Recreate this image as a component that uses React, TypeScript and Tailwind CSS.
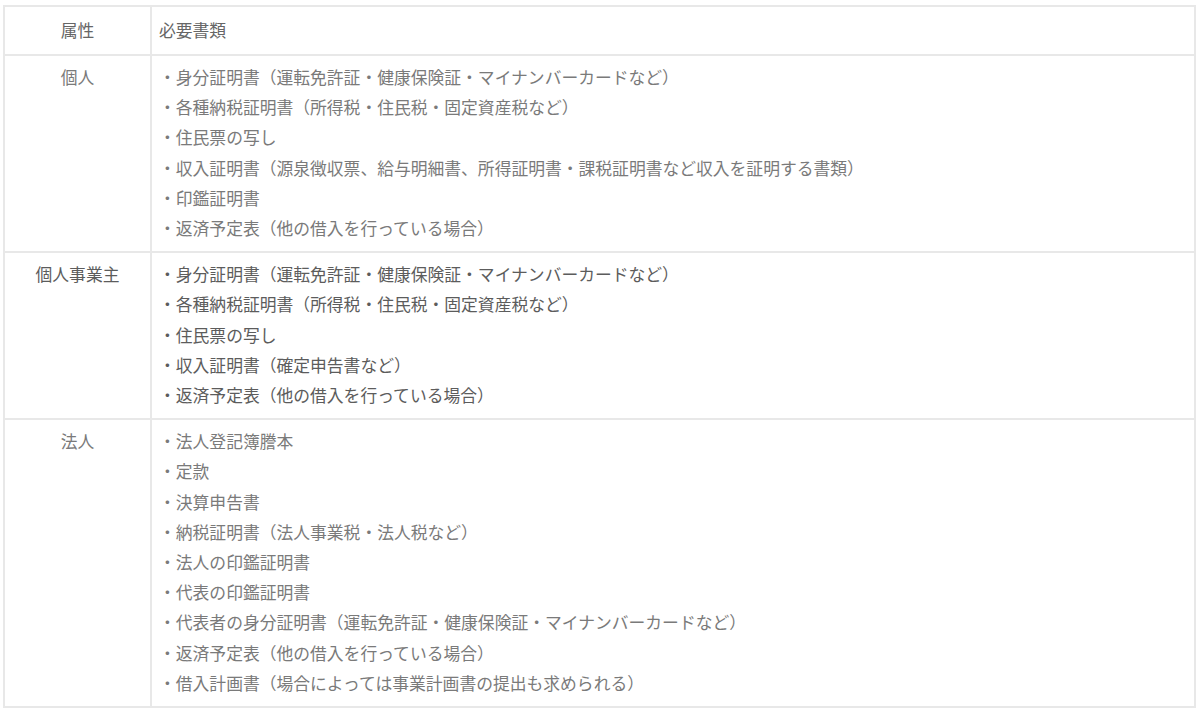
export default function App() {
  const rows: { label: string; items: string[]; color: string }[] = [
    {
      label: "個人",
      color: "text-[#7a7a7a]",
      items: [
        "・身分証明書（運転免許証・健康保険証・マイナンバーカードなど）",
        "・各種納税証明書（所得税・住民税・固定資産税など）",
        "・住民票の写し",
        "・収入証明書（源泉徴収票、給与明細書、所得証明書・課税証明書など収入を証明する書類）",
        "・印鑑証明書",
        "・返済予定表（他の借入を行っている場合）",
      ],
    },
    {
      label: "個人事業主",
      color: "text-[#5c5c5c]",
      items: [
        "・身分証明書（運転免許証・健康保険証・マイナンバーカードなど）",
        "・各種納税証明書（所得税・住民税・固定資産税など）",
        "・住民票の写し",
        "・収入証明書（確定申告書など）",
        "・返済予定表（他の借入を行っている場合）",
      ],
    },
    {
      label: "法人",
      color: "text-[#7a7a7a]",
      items: [
        "・法人登記簿謄本",
        "・定款",
        "・決算申告書",
        "・納税証明書（法人事業税・法人税など）",
        "・法人の印鑑証明書",
        "・代表の印鑑証明書",
        "・代表者の身分証明書（運転免許証・健康保険証・マイナンバーカードなど）",
        "・返済予定表（他の借入を行っている場合）",
        "・借入計画書（場合によっては事業計画書の提出も求められる）",
      ],
    },
  ];
  return (
    <div
      className="bg-white w-[1200px] h-[711px] pl-[3px] pt-[5px]"
      style={{ fontFamily: '"Noto Sans CJK JP", "Noto Sans", sans-serif' }}
    >
      <table className="w-[1193px] border-collapse text-[16.8px] leading-[30.2px]">
        <tbody>
          <tr>
            <td className="w-[147px] border-2 border-[#e8e8e8] text-center align-middle h-[49px] text-[#666]">
              属性
            </td>
            <td className="border-2 border-[#e8e8e8] pl-[7px] align-middle text-[#666]">必要書類</td>
          </tr>
          {rows.map((r) => (
            <tr key={r.label}>
              <td className={`border-2 border-[#e8e8e8] text-center align-top pt-[6px] pb-[8px] ${r.color}`}>
                {r.label}
              </td>
              <td className={`border-2 border-[#e8e8e8] align-top pl-[7px] pt-[6px] pb-[8px] ${r.color}`}>
                {r.items.map((it, i) => (
                  <div key={i}>{it}</div>
                ))}
              </td>
            </tr>
          ))}
        </tbody>
      </table>
    </div>
  );
}
